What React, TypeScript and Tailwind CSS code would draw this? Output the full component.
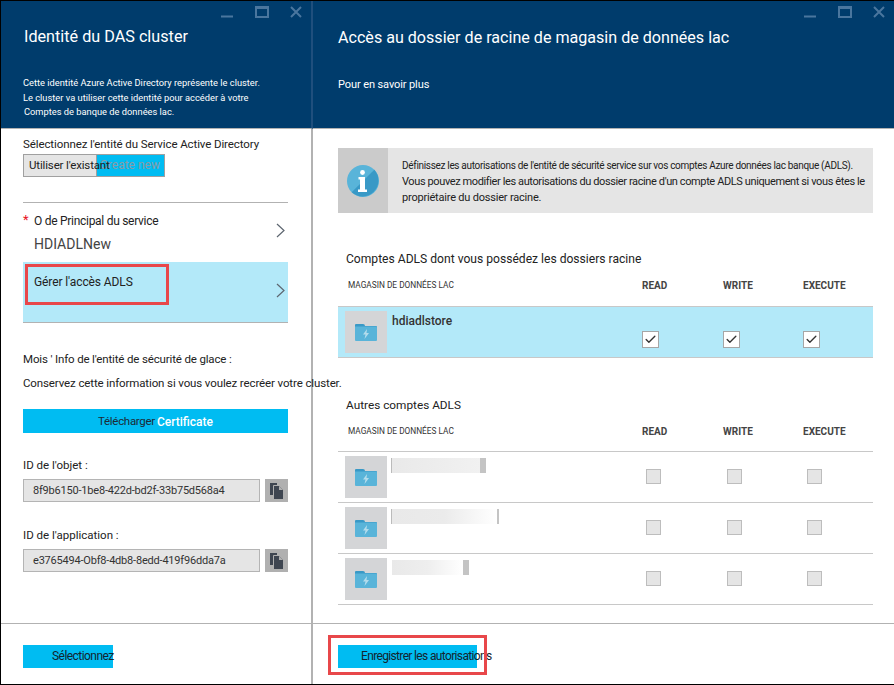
import { Check } from 'lucide-react';

const FONT = 'font-["Roboto","Noto_Sans",sans-serif]';

function WindowControls() {
  return (
    <div className="flex h-[17px] items-start justify-end">
      <svg width="86" height="17" viewBox="0 0 86 17" fill="none" stroke="#4a769e">
        <path d="M5 15.500h12" strokeWidth="2" />
        <rect x="40" y="6" width="12" height="10" strokeWidth="2" />
        <path d="M40 6.500h12" strokeWidth="3" />
        <path d="M75 6l10 10M85 6L75 16" strokeWidth="2" />
      </svg>
    </div>
  );
}

function Chevron() {
  return (
    <svg width="9" height="15" viewBox="0 0 9 15" fill="none" stroke="#5d6670" strokeWidth="1.2">
      <path d="M1 1l7 6.500L1 14" />
    </svg>
  );
}

function InfoIcon() {
  return (
    <svg width="32" height="32" viewBox="0 0 32 32">
      <circle cx="16" cy="16" r="16" fill="#59b4d9" />
      <path d="M27.300 4.700A16 16 0 0 1 4.700 27.300z" fill="#3999c6" />
      <circle cx="15.500" cy="7.500" r="2.400" fill="#fff" />
      <path d="M11.500 12h6.500v12.500h2V27h-9v-2.500h2V14.500h-1.500z" fill="#fff" />
    </svg>
  );
}

function FolderIcon() {
  return (
    <svg width="22" height="19" viewBox="0 0 22 19">
      <path d="M0 2a1 1 0 0 1 1-1h7a2 2 0 0 1 2 2h11a1 1 0 0 1 1 1v1H0z" fill="#3999c6" />
      <path d="M0 3.500h21a1 1 0 0 1 1 1V17a1 1 0 0 1-1 1H1a1 1 0 0 1-1-1z" fill="#59b4d9" />
      <path d="M12 6L8 11.500h2.500L9.500 16l4.500-6h-2.500z" fill="#b3dcec" />
    </svg>
  );
}

function CopyIcon() {
  return (
    <svg width="13" height="16" viewBox="0 0 13 16" fill="#3e4550">
      <path d="M0 0h7v2H4a1 1 0 0 0-1 1v9H0z" />
      <path d="M4 3h5l4 4v9H4z" />
      <path d="M9 3v4h4z" fill="#b0b0b0" />
    </svg>
  );
}

function IdField({ label, value, className }: { label: string; value: string; className: string }) {
  return (
    <div className={className}>
      <p className="text-[11.500px] leading-4 text-[#222]">{label}</p>
      <div className="mt-[6px] flex gap-[5px]">
        <div className="flex h-[23px] w-[237px] items-center whitespace-nowrap border border-[#b4b4b4] bg-[#e5e5e5] pl-[9px] pt-px text-[11px] tracking-[-0.2px] text-[#333]">
          {value}
        </div>
        <div className="flex h-[23px] w-[23px] items-center justify-center bg-[#b0b0b0]">
          <CopyIcon />
        </div>
      </div>
    </div>
  );
}

function Tile() {
  return (
    <div className="flex h-[42px] w-[42px] shrink-0 items-center justify-center bg-[#d4d5d7]">
      <FolderIcon />
    </div>
  );
}

function TableHead() {
  return (
    <div className="mt-[12px] flex h-3 items-center text-[10px] font-bold text-[#444]">
      <span className="ml-[10px] w-[294px] text-[8.300px] font-normal text-[#333]">MAGASIN DE DONNÉES LAC</span>
      <span className="w-[81px]">READ</span>
      <span className="w-[80px]">WRITE</span>
      <span>EXECUTE</span>
    </div>
  );
}

function DisabledBox({ className }: { className: string }) {
  return <div className={`h-[15px] w-[15px] border border-[#bdbdbd] bg-[#e5e5e5] ${className}`} />;
}

function CheckedBox({ className }: { className: string }) {
  return (
    <div className={`flex h-[17px] w-[17px] items-center justify-center border border-[#a6a6a6] bg-white ${className}`}>
      <Check size={13} strokeWidth={2.5} className="text-[#333]" />
    </div>
  );
}

const OTHER_ROWS = [
  { name: 'w-[89px] ml-[4px] border-l from-[#e9e9e9] to-[#f1f1f1]', bar: 'w-[6px]' },
  { name: 'w-[106px] ml-[4px] border-l from-[#e9e9e9] via-[#ebebeb] to-white', bar: 'w-[2px]' },
  { name: 'w-[71px] ml-[5px] from-[#e9e9e9] via-[#eeeeee] to-white', bar: 'w-[6px]' },
];

export default function App() {
  return (
    <div className={`flex h-[685px] w-[894px] overflow-hidden border-y border-l border-black bg-white ${FONT}`}>
      {/* left blade */}
      <div className="relative z-10 flex w-[312px] shrink-0 flex-col">
        <div className="h-[128px] shrink-0 border-b border-r-2 border-b-[#b2b2b2] border-r-[#1f4f7d] bg-[#003c6c] pr-[9px]">
          <WindowControls />
          <h1 className="ml-[23px] mt-[9px] text-[16.200px] leading-5 text-white">Identité du DAS cluster</h1>
          <div className="ml-[22px] mt-[29px] text-[9.300px] leading-[14.500px] text-white">
            <p>Cette identité Azure Active Directory représente le cluster.</p>
            <p>Le cluster va utiliser cette identité pour accéder à votre</p>
            <p className="pl-px">Comptes de banque de données lac.</p>
          </div>
        </div>

        <div className="relative flex-1 border-r-2 border-[#b2b2b2] pl-[22px] pr-[23px]">
          <p className="mt-[7px] whitespace-nowrap text-[11.500px] leading-4 tracking-[-0.1px] text-[#222]">Sélectionnez l'entité du Service Active Directory</p>
          <div className="mt-[2px] flex h-[23px] w-[142px] text-[11.500px]">
            <div className="z-10 w-[74px] whitespace-nowrap border border-[#a0a0a0] bg-[#e5e5e5] pl-[5px] leading-[21px] tracking-[-0.15px] text-[#222]">
              Utiliser l'existant
            </div>
            <div className="w-[68px] whitespace-nowrap border-y border-r border-[#a0a0a0] bg-[#00bcf2] pl-[3px] text-[12px] leading-[21px] text-[#8a9aa5]">
              Create new
            </div>
          </div>

          <div className="mt-[25px] flex h-[60px] items-start justify-between border-t border-[#b2b2b2] pr-[3px]">
            <div className="relative pl-[11px] pt-[10px]">
              <span className="absolute left-0 top-[9px] text-[13px] leading-4 text-[#e81123]">*</span>
              <p className="text-[12px] leading-4 tracking-[-0.28px] text-[#222]">O de Principal du service</p>
              <p className="mt-[7px] text-[14px] leading-4 text-[#444]">HDIADLNew</p>
            </div>
            <div className="pt-[20px]">
              <Chevron />
            </div>
          </div>

          <div className="flex h-[61px] items-start justify-between border-b border-[#b2b2b2] bg-[#b3e9f9] pl-[11px] pr-[3px]">
            <p className="pt-[12px] text-[12px] leading-4 tracking-[-0.1px] text-[#222]">Gérer l'accès ADLS</p>
            <div className="pt-[21px]">
              <Chevron />
            </div>
          </div>
          <div className="absolute left-[24px] top-[135px] h-[41px] w-[144px] border-[3px] border-[#e8474a]" />

          <p className="mt-[28px] text-[11.500px] leading-4 tracking-[-0.15px] text-[#222]">Mois ' Info de l'entité de sécurité de glace :</p>
          <p className="mt-[8px] whitespace-nowrap text-[11.500px] leading-4 tracking-[-0.12px] text-[#222]">
            Conservez cette information si vous voulez recréer votre cluster.
          </p>

          <div className="mt-[18px] flex h-[24px] w-[265px] items-center justify-center bg-[#00bcf2] pt-px text-[11.500px]">
            <span className="tracking-[-0.3px] text-[#1c2b36]">Télécharger</span>
            <span className="ml-[2px] text-[12px] font-medium text-white">Certificate</span>
          </div>

          <IdField className="mt-[24px]" label="ID de l'objet :" value="8f9b6150-1be8-422d-bd2f-33b75d568a4" />
          <IdField className="mt-[25px]" label="ID de l'application :" value="e3765494-Obf8-4db8-8edd-419f96dda7a" />
        </div>

        <div className="flex h-[61px] shrink-0 items-start border-r-2 border-t border-[#b2b2b2] px-[22px] pt-[21px]">
          <div className="h-[23px] w-[90px] whitespace-nowrap bg-[#00bcf2] pl-[29px] text-[12px] leading-[23px] tracking-[-0.55px] text-[#14242f]">
            Sélectionnez
          </div>
        </div>
      </div>

      {/* right blade */}
      <div className="flex min-w-0 flex-1 flex-col">
        <div className="h-[128px] shrink-0 border-b border-[#b2b2b2] bg-[#003c6c] pr-[9px]">
          <WindowControls />
          <h1 className="ml-[25px] mt-[10px] whitespace-nowrap text-[16.100px] leading-5 text-white">
            Accès au dossier de racine de magasin de données lac
          </h1>
          <p className="ml-[25px] mt-[29px] text-[11px] leading-4 tracking-[-0.1px] text-white">Pour en savoir plus</p>
        </div>

        <div className="relative flex-1 pl-[25px] pr-[21px]">
          <div className="mt-[19px] flex h-[65px] bg-[#e5e5e5]">
            <div className="flex w-[50px] shrink-0 items-center justify-center bg-[#cbcbcb]">
              <InfoIcon />
            </div>
            <div className="pl-[14px] pt-[10px] text-[#222]">
              <p className="whitespace-nowrap text-[10px] leading-4 tracking-[-0.32px]">
                Définissez les autorisations de l'entité de sécurité service sur vos comptes Azure données lac banque (ADLS).
              </p>
              <p className="whitespace-nowrap text-[11px] leading-4 tracking-[-0.39px]">
                Vous pouvez modifier les autorisations du dossier racine d'un compte ADLS uniquement si vous êtes le
              </p>
              <p className="text-[11px] leading-4 tracking-[-0.2px]">propriétaire du dossier racine.</p>
            </div>
          </div>

          <p className="ml-[8px] mt-[39px] text-[12.100px] leading-[15px] text-[#222]">Comptes ADLS dont vous possédez les dossiers racine</p>
          <TableHead />

          <div className="mt-[15px] flex h-[52px] items-start border-y border-[#c8c8c8] bg-[#b3e9f9] pl-[7px] pt-[4px]">
            <Tile />
            <span className="ml-[5px] mt-[2px] text-[12px] font-medium leading-4 text-[#333]">hdiadlstore</span>
            <div className="ml-auto flex pr-[53px] pt-[20px]">
              <CheckedBox className="mr-[64px]" />
              <CheckedBox className="mr-[63px]" />
              <CheckedBox className="" />
            </div>
          </div>

          <p className="ml-[8px] mt-[40px] text-[11.800px] leading-[15px] text-[#222]">Autres comptes ADLS</p>
          <TableHead />

          <div className="mt-[14px] border-t border-[#c8c8c8]">
            {OTHER_ROWS.map((row, i) => (
              <div key={i} className="flex h-[51px] items-start border-b border-[#c8c8c8] pl-[7px] pt-[4px]">
                <Tile />
                <div className={`mt-[2px] h-[15px] border-[#bbb] bg-gradient-to-r ${row.name}`} />
                <div className={`mt-[2px] h-[15px] bg-[#c4c4c4] ${row.bar}`} />
                <div className="ml-auto flex pr-[51px] pt-[13px]">
                  <DisabledBox className="mr-[66px]" />
                  <DisabledBox className="mr-[65px]" />
                  <DisabledBox className="" />
                </div>
              </div>
            ))}
          </div>
        </div>

        <div className="relative flex h-[61px] shrink-0 items-start border-t border-[#b2b2b2] pl-[25px] pt-[21px]">
          <div className="h-[23px] w-[139px] whitespace-nowrap bg-[#00bcf2] pl-[23px] text-[12px] leading-[23px] tracking-[-0.65px] text-[#14242f]">
            Enregistrer les autorisations
          </div>
          <div className="absolute left-[15px] top-[11px] h-[40px] w-[159px] border-[3px] border-[#e8474a]" />
        </div>
      </div>
    </div>
  );
}
